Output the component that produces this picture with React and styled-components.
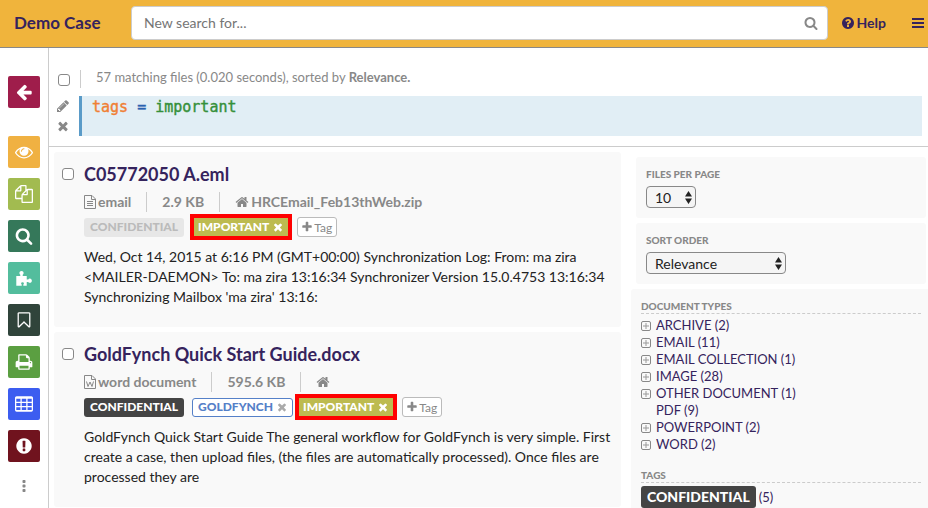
import React from 'react';
import styled, { createGlobalStyle } from 'styled-components';

const GlobalStyle = createGlobalStyle`
  * {
    box-sizing: border-box;
  }
  body {
    margin: 0;
    background-color: white;
    color: #222;
    font-family: Lato, 'Open Sans', sans-serif;
    font-size: 14px;
    line-height: 20px;
  }
  button, input, select {
    font-family: inherit;
  }
`;

// icon outlines on a 1792 grid
const icons = {
  arrowLeft:
    'M1664 896v128q0 53-32.5 90.5t-84.5 37.5h-704l293 294q38 36 38 90t-38 90l-75 76q-37 37-90 37-52 0-91-37l-651-652q-37-37-37-90 0-52 37-91l651-650q38-38 91-38 52 0 90 38l75 74q38 38 38 91t-38 91l-293 293h704q52 0 84.5 37.5t32.5 90.5z',
  eye:
    'M1664 960q-152-236-381-353 61 104 61 225 0 185-131.5 316.5t-316.5 131.5-316.5-131.5-131.5-316.5q0-121 61-225-229 117-381 353 133 205 333.5 326.5t434.5 121.5 434.5-121.5 333.5-326.5zm-720-384q0-20-14-34t-34-14q-125 0-214.5 89.5t-89.5 214.5q0 20 14 34t34 14 34-14 14-34q0-86 61-147t147-61q20 0 34-14t14-34zm848 384q0 34-20 69-140 230-376.5 368.5t-499.5 138.5-499.5-139-376.5-368q-20-35-20-69t20-69q140-229 376.5-368t499.5-139 499.5 139 376.5 368q20 35 20 69z',
  files:
    'M1696 384q40 0 68 28t28 68v1216q0 40-28 68t-68 28h-960q-40 0-68-28t-28-68v-288h-544q-40 0-68-28t-28-68v-672q0-40 20-88t48-76l408-408q28-28 76-48t88-20h416q40 0 68 28t28 68v328q68-40 128-40h416zm-544 213l-299 299h299v-299zm-640-384l-299 299h299v-299zm196 647l316-316v-416h-384v416q0 40-28 68t-68 28h-416v640h512v-256q0-40 20-88t48-76zm956 804v-1152h-384v416q0 40-28 68t-68 28h-416v640h896z',
  search:
    'M1216 832q0-185-131.5-316.5t-316.5-131.5-316.5 131.5-131.5 316.5 131.5 316.5 316.5 131.5 316.5-131.5 131.5-316.5zm512 832q0 52-38 90t-90 38q-54 0-90-38l-343-342q-179 124-399 124-143 0-273.5-55.5t-225-150-150-225-55.5-273.5 55.5-273.5 150-225 225-150 273.5-55.5 273.5 55.5 225 150 150 225 55.5 273.5q0 220-124 399l343 343q37 37 37 90z',
  puzzle:
    'M128 704h400v-140q-90-60-90-160 0-90 60-145t150-55 150 55 60 145q0 100-90 160v140h400v340h150q60-90 160-90 90 0 145 60t55 150-55 150-145 60q-100 0-160-90h-150v390h-340v-130q60-50 60-110 0-120-140-120t-140 120q0 60 60 110v130h-540z',
  bookmark:
    'M1408 256h-1024v1242l423-406 89-85 89 85 423 406v-1242zm12-128q23 0 44 9 33 13 52.5 41t19.5 62v1289q0 34-19.5 62t-52.5 41q-19 8-44 8-48 0-83-32l-441-424-441 424q-36 33-83 33-23 0-44-9-33-13-52.5-41t-19.5-62v-1289q0-34 19.5-62t52.5-41q21-9 44-9h1048z',
  print:
    'M448 1536h896v-256h-896v256zm0-640h896v-384h-160q-40 0-68-28t-28-68v-160h-640v640zm1152 64q0-26-19-45t-45-19-45 19-19 45 19 45 45 19 45-19 19-45zm128 0v416q0 13-9.5 22.5t-22.5 9.5h-224v160q0 40-28 68t-68 28h-960q-40 0-68-28t-28-68v-160h-224q-13 0-22.5-9.5t-9.5-22.5v-416q0-79 56.5-135.5t135.5-56.5h64v-544q0-40 28-68t68-28h672q40 0 88 20t76 48l152 152q28 28 48 76t20 88v256h64q79 0 135.5 56.5t56.5 135.5z',
  table:
    'M160 128h1472q66 0 113 47t47 113v1216q0 66-47 113t-113 47h-1472q-66 0-113-47t-47-113v-1216q0-66 47-113t113-47zM128 384v288h416v-288zM672 384v288h448v-288zM1248 384v288h416v-288zM128 800v288h416v-288zM672 800v288h448v-288zM1248 800v288h416v-288zM128 1216v288h416v-288zM672 1216v288h448v-288zM1248 1216v288h416v-288z',
  alert:
    'M896 128q209 0 385.5 103t279.5 279.5 103 385.5-103 385.5-279.5 279.5-385.5 103-385.5-103-279.5-279.5-103-385.5 103-385.5 279.5-279.5 385.5-103zm128 1247v-190q0-14-9-23.5t-22-9.5h-192q-13 0-23 10t-10 23v190q0 13 10 23t23 10h192q13 0 22-9.5t9-23.5zm-2-344l18-621q0-12-10-18-10-8-24-8h-220q-14 0-24 8-10 6-10 18l17 621q0 10 10 17.5t24 7.5h185q14 0 23.5-7.5t10.5-17.5z',
  dots:
    'M800 128h192q96 0 96 96v192q0 96-96 96h-192q-96 0-96-96v-192q0-96 96-96zM800 704h192q96 0 96 96v192q0 96-96 96h-192q-96 0-96-96v-192q0-96 96-96zM800 1280h192q96 0 96 96v192q0 96-96 96h-192q-96 0-96-96v-192q0-96 96-96z',
  question:
    'M1024 1376v-192q0-14-9-23t-23-9h-192q-14 0-23 9t-9 23v192q0 14 9 23t23 9h192q14 0 23-9t9-23zm256-672q0-88-55.5-163t-138.5-116-170-41q-243 0-371 213-15 24 8 42l132 100q7 6 19 6 16 0 25-12 53-68 86-92 34-24 86-24 48 0 85.5 26t37.5 59q0 38-20 61t-68 45q-63 28-115.5 86.5t-52.5 125.5v36q0 14 9 23t23 9h192q14 0 23-9t9-23q0-19 21.5-49.5t54.5-49.5q32-18 49-28.5t46-35 44.5-48 28-60.5 12.5-81zm384 192q0 209-103 385.5t-279.5 279.5-385.5 103-385.5-103-279.5-279.5-103-385.5 103-385.5 279.5-279.5 385.5-103 385.5 103 279.5 279.5 103 385.5z',
  bars:
    'M128 256h1536v256h-1536zM128 768h1536v256h-1536zM128 1280h1536v256h-1536z',
  pencil:
    'M491 1536l91-91-235-235-91 91v107h128v128h107zm523-928q0-22-22-22-10 0-17 7l-542 542q-7 7-7 17 0 22 22 22 10 0 17-7l542-542q7-7 7-17zm-54-192l416 416-832 832h-416v-416zm683 96q0 53-37 90l-166 166-416-416 166-165q36-38 90-38 53 0 91 38l235 234q37 39 37 91z',
  times:
    'M1490 1322q0 40-28 68l-136 136q-28 28-68 28t-68-28l-294-294-294 294q-28 28-68 28t-68-28l-136-136q-28-28-28-68t28-68l294-294-294-294q-28-28-28-68t28-68l136-136q28-28 68-28t68 28l294 294 294-294q28-28 68-28t68 28l136 136q28 28 28 68t-28 68l-294 294 294 294q28 28 28 68z',
  home:
    'M1472 992v480q0 26-19 45t-45 19h-384v-384h-256v384h-384q-26 0-45-19t-19-45v-480q0-1 .5-3t.5-3l575-474 575 474q1 2 1 6zm223-69l-62 74q-8 9-21 11h-3q-13 0-21-7l-692-577-692 577q-12 8-24 7-13-2-21-11l-62-74q-8-10-7-23.5t11-21.5l719-599q32-26 76-26t76 26l244 204v-195q0-14 9-23t23-9h192q14 0 23 9t9 23v408l219 182q10 8 11 21.5t-7 23.5z',
  plus:
    'M1600 736v192q0 40-28 68t-68 28h-416v416q0 40-28 68t-68 28h-192q-40 0-68-28t-28-68v-416h-416q-40 0-68-28t-28-68v-192q0-40 28-68t68-28h416v-416q0-40 28-68t68-28h192q40 0 68 28t28 68v416h416q40 0 68 28t28 68z'
};

const StyledSvg = styled.svg`
  display: block;
  flex: none;
  width: ${({ $size }) => $size}px;
  height: ${({ $size }) => $size}px;
`;

const Icon = ({ name, size = 14 }) => (
  <StyledSvg $size={size} viewBox="0 0 1792 1792" aria-hidden="true">
    <path d={icons[name]} fill="currentColor" fillRule="evenodd" />
  </StyledSvg>
);

const FileSvg = styled.svg`
  display: block;
  flex: none;
  width: 12px;
  height: 14px;
`;

const FileIcon = ({ type }) => (
  <FileSvg
    viewBox="0 0 12 14"
    fill="none"
    stroke="currentColor"
    aria-hidden="true"
  >
    <path d="M.5.5h7.5l3.5 3.500v9.500H.5zM7.5.5v4h4" />
    {type === 'word' ? (
      <path d="M2.5 6.5l1.5 5 2-4.500 2 4.500 1.500-5" />
    ) : (
      <path d="M3 6.5h6M3 8.5h6M3 10.5h6" />
    )}
  </FileSvg>
);

const Page = styled.div`
  display: flex;
  flex-direction: column;
  height: 100vh;
  overflow: hidden;
`;

const Header = styled.header`
  display: flex;
  align-items: center;
  flex: none;
  height: 48px;
  padding: 0 3px 2px 14px;
  background-color: #f0b43c;
  border-bottom: 1px solid #888;
  color: #35235d;
`;

const CaseName = styled.h1`
  width: 117px;
  margin: 0;
  font-size: 17px;
  font-weight: 700;
`;

const SearchBox = styled.form`
  display: flex;
  align-items: center;
  flex: 1;
  height: 34px;
  padding: 0 9px 0 12px;
  background-color: white;
  border: 1px solid #ccc;
  border-radius: 4px;
  color: #888;
`;

const SearchInput = styled.input`
  flex: 1;
  min-width: 0;
  padding: 0;
  border: none;
  outline: none;
  background: none;
  font-size: 14px;
  ::placeholder {
    color: #888;
    opacity: 1;
  }
`;

const IconButton = styled.button`
  display: flex;
  padding: 0;
  border: none;
  background: none;
  color: inherit;
  cursor: pointer;
`;

const HelpLink = styled.a`
  display: flex;
  align-items: center;
  gap: 2px;
  margin: 0 25px 0 13px;
  color: inherit;
  font-size: 14px;
  font-weight: 700;
  text-decoration: none;
`;

const Body = styled.div`
  display: flex;
  flex: 1;
  min-height: 0;
`;

const Rail = styled.nav`
  display: flex;
  flex-direction: column;
  align-items: center;
  flex: none;
  gap: 10px;
  width: 49px;
  padding: 28px 8px 0;
  border-right: 1px solid #ccc;
  color: #888;
`;

const RailButton = styled.button`
  display: flex;
  align-items: center;
  justify-content: center;
  flex: none;
  width: 32px;
  height: 32px;
  padding: 0;
  border: none;
  border-radius: 2px;
  background-color: ${({ $color }) => $color};
  color: white;
  cursor: pointer;
  &:first-child {
    margin-bottom: 18px;
  }
`;

const MoreButton = styled(IconButton)`
  margin-top: 7px;
`;

const Main = styled.main`
  flex: 1;
  min-width: 0;
`;

const QueryBar = styled.section`
  display: grid;
  grid-template-columns: 14px 1fr;
  gap: 8px 9px;
  height: 99px;
  padding: 22px 6px 10px 7px;
  border-bottom: 1px solid #ccc;
  color: #888;
`;

const Checkbox = styled.input`
  appearance: none;
  flex: none;
  width: 12px;
  height: 12px;
  margin: 0;
  background-color: white;
  border: 1px solid #888;
  border-radius: 3px;
`;

const SelectAll = styled(Checkbox)`
  margin: 4px 0 0 2px;
`;

const Summary = styled.p`
  height: 18px;
  margin: 0 0 0 1px;
  padding-left: 15px;
  border-left: 1px solid #ccc;
  font-size: 13px;
  line-height: 14px;
`;

const QueryActions = styled.div`
  display: flex;
  flex-direction: column;
  gap: 6px;
  padding-top: 3px;
`;

const Query = styled.pre`
  height: 40px;
  margin: 0;
  padding: 0 10px;
  background-color: #e1eef5;
  border-left: 3px solid #5a9bc8;
  font-family: 'DejaVu Sans Mono', monospace;
  font-size: 15px;
  line-height: 22px;
`;

const Token = styled.span`
  color: ${({ $color }) => $color};
  -webkit-text-stroke: 0.4px ${({ $color }) => $color};
`;

const Columns = styled.div`
  display: flex;
  align-items: flex-start;
  gap: 10px;
  padding: 5px 0 0 5px;
`;

const Results = styled.section`
  display: flex;
  flex: 1;
  flex-direction: column;
  gap: 5px;
  min-width: 0;
`;

const Card = styled.article`
  display: flex;
  gap: 10px;
  min-height: 175px;
  padding: 12px 8px 10px;
  background-color: #f9f9f9;
  border-radius: 3px;
`;

const CardCheckbox = styled(Checkbox)`
  margin-top: 4px;
`;

const CardBody = styled.div`
  flex: 1;
  min-width: 0;
`;

const FileName = styled.h2`
  margin: 0 0 8px;
  font-size: 18px;
  font-weight: 700;
  line-height: 20px;
  a {
    color: #35235d;
    text-decoration: none;
  }
`;

const Meta = styled.div`
  display: flex;
  color: #888;
  font-size: 14px;
  font-weight: 700;
  line-height: 20px;
`;

const MetaItem = styled.span`
  display: flex;
  align-items: center;
  gap: 2px;
  padding-right: 15px;
  & + & {
    padding-left: 15px;
    border-left: 1px solid #ccc;
  }
`;

const TagRow = styled.div`
  display: flex;
  align-items: center;
  height: 20px;
  margin: 5px 0 10px;
`;

const tagStyles = {
  muted: 'background-color: #e7e7e7; color: #bbb;',
  dark: 'background-color: #444; color: white;',
  outline:
    'margin-left: 8px; padding: 0 4px 0 5px; background-color: white; color: #5580c8; border: 1px solid #5580c8;'
};

const Tag = styled.span`
  display: inline-flex;
  align-items: center;
  gap: 3px;
  height: 19px;
  padding: 0 6px;
  border-radius: 3px;
  font-size: 12px;
  font-weight: 900;
  ${({ $kind }) => tagStyles[$kind]}
`;

// search hits get a thick red frame
const HitTag = styled(Tag)`
  height: 18px;
  margin: 0 4px 0 ${({ $close }) => ($close ? 6 : 10)}px;
  padding: 0 4px;
  background-color: #bdbb50;
  border-radius: 0;
  box-shadow: 0 0 0 4px #f00;
  color: white;
`;

const RemoveButton = styled(IconButton)`
  color: ${({ $muted }) => ($muted ? '#aaa' : 'inherit')};
`;

const AddTag = styled.button`
  display: flex;
  align-items: center;
  gap: 1px;
  height: 20px;
  margin-left: 5px;
  padding: 0 4px 0 3px;
  background-color: white;
  border: 1px solid #bbb;
  border-radius: 3px;
  color: #888;
  font-size: 12px;
  cursor: pointer;
`;

const Excerpt = styled.p`
  margin: 0;
  font-size: 14px;
  line-height: 20px;
`;

const Sidebar = styled.aside`
  flex: none;
  width: 297px;
  padding-top: 5px;
`;

const Panel = styled.div`
  height: 61px;
  margin: 0 2px 5px 5px;
  padding: 11px 10px;
  background-color: #f9f9f9;
  border-radius: 3px;
`;

const PanelLabel = styled.label`
  display: block;
  margin-bottom: 6px;
  color: #888;
  font-size: 10px;
  font-weight: 900;
  line-height: 12px;
`;

const SelectWrap = styled.div`
  position: relative;
  width: ${({ $width }) => $width}px;
  svg {
    position: absolute;
    top: 5px;
    right: 4px;
    width: 7px;
    height: 13px;
    pointer-events: none;
  }
`;

const Select = styled.select`
  appearance: none;
  display: block;
  width: 100%;
  height: 22px;
  padding: 0 8px;
  background-color: #f5f5f5;
  border: 1px solid #888;
  border-radius: 4px;
  color: #222;
  font-size: 14px;
`;

const Facets = styled.div`
  padding: 11px 7px 0 10px;
  background-color: #f9f9f9;
  border-radius: 3px 0 0 0;
`;

const FacetTitle = styled.h3`
  margin: 0 0 3px;
  padding-bottom: 1px;
  border-bottom: 1px dashed #ccc;
  color: #888;
  font-size: 10px;
  font-weight: 900;
  line-height: 12px;
`;

const FacetList = styled.ul`
  margin: 0 0 16px;
  padding: 0;
  list-style: none;
`;

const Facet = styled.li`
  display: flex;
  align-items: center;
  gap: 5px;
  height: 17px;
  color: #888;
  a {
    color: #35235d;
    font-size: 13px;
    line-height: 17px;
    text-decoration: none;
  }
`;

const Spacer = styled.span`
  width: 10px;
`;

const TagFacet = styled.a`
  display: flex;
  align-items: center;
  gap: 3px;
  color: #35235d;
  font-size: 13px;
  text-decoration: none;
`;

const BigTag = styled.span`
  padding: 0 6px;
  background-color: #444;
  border-radius: 3px;
  color: white;
  font-size: 14px;
  font-weight: 900;
  line-height: 22px;
`;

const railItems = [
  { label: 'Back', icon: 'arrowLeft', color: '#9f1d4b' },
  { label: 'View', icon: 'eye', color: '#f0b142' },
  { label: 'Copy', icon: 'files', color: '#a2bb50' },
  { label: 'Search', icon: 'search', color: '#35785a' },
  { label: 'Add-ons', icon: 'puzzle', color: '#53bd9d' },
  { label: 'Bookmark', icon: 'bookmark', color: '#30443b' },
  { label: 'Print', icon: 'print', color: '#5b9f41' },
  { label: 'Table', icon: 'table', color: '#3c5df0' },
  { label: 'Problems', icon: 'alert', color: '#70131e' }
];

const results = [
  {
    id: 1,
    name: 'C05772050 A.eml',
    kind: 'text',
    type: 'email',
    size: '2.9 KB',
    parent: 'HRCEmail_Feb13thWeb.zip',
    confidential: false,
    text:
      "Wed, Oct 14, 2015 at 6:16 PM (GMT+00:00) Synchronization Log: From: ma zira <MAILER-DAEMON> To: ma zira 13:16:34 Synchronizer Version 15.0.4753 13:16:34 Synchronizing Mailbox 'ma zira' 13:16:"
  },
  {
    id: 2,
    name: 'GoldFynch Quick Start Guide.docx',
    kind: 'word',
    type: 'word document',
    size: '595.6 KB',
    parent: '',
    confidential: true,
    extra: 'GOLDFYNCH',
    text:
      'GoldFynch Quick Start Guide The general workflow for GoldFynch is very simple. First create a case, then upload files, (the files are automatically processed). Once files are processed they are'
  }
];

const docTypes = [
  { label: 'ARCHIVE (2)', nested: true },
  { label: 'EMAIL (11)', nested: true },
  { label: 'EMAIL COLLECTION (1)', nested: true },
  { label: 'IMAGE (28)', nested: true },
  { label: 'OTHER DOCUMENT (1)', nested: true },
  { label: 'PDF (9)', nested: false },
  { label: 'POWERPOINT (2)', nested: true },
  { label: 'WORD (2)', nested: true }
];

const Arrows = () => (
  <svg viewBox="0 0 7 13" fill="#222" aria-hidden="true">
    <path d="M3.5 0L7 5.5H0zM3.5 13L0 7.5h7z" />
  </svg>
);

const ExpandIcon = () => (
  <svg width="10" height="10" viewBox="0 0 10 10" fill="none" stroke="#888">
    <rect x=".5" y=".5" width="9" height="9" rx="1.5" />
    <path d="M2 5h6M5 2v6" stroke="#999" />
  </svg>
);

const Result = ({ file }) => (
  <Card>
    <CardCheckbox type="checkbox" aria-label={`Select ${file.name}`} />
    <CardBody>
      <FileName>
        <a href="#file">{file.name}</a>
      </FileName>
      <Meta>
        <MetaItem>
          <FileIcon type={file.kind} />
          {file.type}
        </MetaItem>
        <MetaItem>{file.size}</MetaItem>
        <MetaItem>
          <Icon name="home" size={14} />
          {file.parent}
        </MetaItem>
      </Meta>
      <TagRow>
        <Tag $kind={file.confidential ? 'dark' : 'muted'}>CONFIDENTIAL</Tag>
        {file.extra && (
          <Tag $kind="outline">
            {file.extra}
            <RemoveButton $muted aria-label={`Remove ${file.extra}`}>
              <Icon name="times" size={12} />
            </RemoveButton>
          </Tag>
        )}
        <HitTag $close={!!file.extra}>
          IMPORTANT
          <RemoveButton aria-label="Remove IMPORTANT">
            <Icon name="times" size={12} />
          </RemoveButton>
        </HitTag>
        <AddTag>
          <Icon name="plus" size={12} />
          Tag
        </AddTag>
      </TagRow>
      <Excerpt>{file.text}</Excerpt>
    </CardBody>
  </Card>
);

const App = () => {
  return (
    <Page>
      <GlobalStyle />
      <Header>
        <CaseName>Demo Case</CaseName>
        <SearchBox>
          <SearchInput
            type="text"
            aria-label="New search"
            placeholder="New search for..."
          />
          <IconButton type="button" aria-label="Search">
            <Icon name="search" size={14} />
          </IconButton>
        </SearchBox>
        <HelpLink href="#help">
          <Icon name="question" size={14} />
          Help
        </HelpLink>
        <IconButton aria-label="Menu">
          <Icon name="bars" size={14} />
        </IconButton>
      </Header>
      <Body>
        <Rail>
          {railItems.map(item => (
            <RailButton
              key={item.label}
              $color={item.color}
              aria-label={item.label}
            >
              <Icon name={item.icon} size={18} />
            </RailButton>
          ))}
          <MoreButton aria-label="More">
            <Icon name="dots" size={14} />
          </MoreButton>
        </Rail>
        <Main>
          <QueryBar>
            <SelectAll type="checkbox" aria-label="Select all files" />
            <Summary>
              57 matching files (0.020 seconds), sorted by <b>Relevance.</b>
            </Summary>
            <QueryActions>
              <IconButton aria-label="Edit query">
                <Icon name="pencil" size={14} />
              </IconButton>
              <IconButton aria-label="Clear query">
                <Icon name="times" size={14} />
              </IconButton>
            </QueryActions>
            <Query>
              <Token $color="#f08035">tags</Token>
              <Token $color="#2a62b0"> = </Token>
              <Token $color="#35903a">important</Token>
            </Query>
          </QueryBar>
          <Columns>
            <Results>
              {results.map(file => (
                <Result key={file.id} file={file} />
              ))}
            </Results>
            <Sidebar>
              <Panel>
                <PanelLabel htmlFor="perPage">FILES PER PAGE</PanelLabel>
                <SelectWrap $width={50}>
                  <Select id="perPage">
                    <option>10</option>
                  </Select>
                  <Arrows />
                </SelectWrap>
              </Panel>
              <Panel>
                <PanelLabel htmlFor="sortOrder">SORT ORDER</PanelLabel>
                <SelectWrap $width={140}>
                  <Select id="sortOrder">
                    <option>Relevance</option>
                  </Select>
                  <Arrows />
                </SelectWrap>
              </Panel>
              <Facets>
                <FacetTitle>DOCUMENT TYPES</FacetTitle>
                <FacetList>
                  {docTypes.map(type => (
                    <Facet key={type.label}>
                      {type.nested ? <ExpandIcon /> : <Spacer />}
                      <a href="#type">{type.label}</a>
                    </Facet>
                  ))}
                </FacetList>
                <FacetTitle>TAGS</FacetTitle>
                <TagFacet href="#tag">
                  <BigTag>CONFIDENTIAL</BigTag>
                  (5)
                </TagFacet>
              </Facets>
            </Sidebar>
          </Columns>
        </Main>
      </Body>
    </Page>
  );
};

export default App;
